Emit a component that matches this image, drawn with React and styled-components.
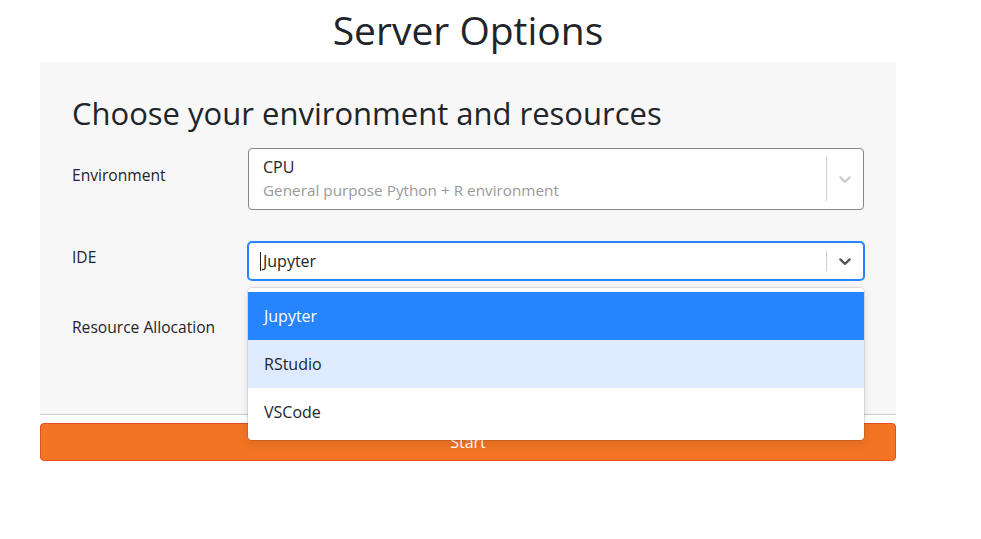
import React from 'react'
import styled, { createGlobalStyle } from 'styled-components'

const GlobalStyle = createGlobalStyle`
  body {
    margin: 0;
    background: #fff;
    font-family: 'Open Sans', 'Noto Sans', sans-serif;
    color: #212529;
  }
`

const ideOptions = [
  { label: 'Jupyter', state: 'selected' },
  { label: 'RStudio', state: 'focused' },
  { label: 'VSCode', state: 'idle' }
]

const Chevron = ({ color }) => (
  <svg width='20' height='20' viewBox='0 0 20 20' fill={color}>
    <path d='M4.516 7.548c0.436-0.446 1.043-0.481 1.576 0l3.908 3.747 3.908-3.747c0.533-0.481 1.141-0.446 1.574 0 0.436 0.445 0.408 1.197 0 1.615-0.406 0.418-4.695 4.502-4.695 4.502-0.217 0.223-0.502 0.335-0.787 0.335s-0.57-0.112-0.789-0.335c0 0-4.287-4.084-4.695-4.502s-0.436-1.17 0-1.615z' />
  </svg>
)

const App = () => (
  <Page>
    <GlobalStyle />
    <Title>Server Options</Title>
    <Panel>
      <Heading>Choose your environment and resources</Heading>

      <FormRow>
        <Label>Environment</Label>
        <Control $height={62} $border='#888'>
          <ValueBox>
            <Value>CPU</Value>
            <Hint>General purpose Python + R environment</Hint>
          </ValueBox>
          <Separator />
          <Indicator><Chevron color='#ccc' /></Indicator>
        </Control>
      </FormRow>

      <FormRow>
        <Label>IDE</Label>
        <Field>
          <Control $height={38} $focused>
            <ValueBox>
              <Value><Caret />Jupyter</Value>
            </ValueBox>
            <Separator />
            <Indicator><Chevron color='#555' /></Indicator>
          </Control>
          <Menu>
            {ideOptions.map((option) => (
              <MenuOption key={option.label} $state={option.state}>
                {option.label}
              </MenuOption>
            ))}
          </Menu>
        </Field>
      </FormRow>

      <FormRow>
        <Label>Resource Allocation</Label>
        <Control $height={38} $border='#ccc'>
          <ValueBox />
          <Separator />
          <Indicator><Chevron color='#ccc' /></Indicator>
        </Control>
      </FormRow>
    </Panel>
    <StartButton>Start</StartButton>
  </Page>
)

export default App

const Page = styled.div`
  width: 856px;
  margin: 0 0 0 40px;
  display: flex;
  flex-direction: column;
`

const Title = styled.h1`
  margin: 6px 0 8px;
  text-align: center;
  font-size: 39px;
  font-weight: 400;
  line-height: 48px;
  color: #212529;
`

const Panel = styled.div`
  background: #f7f7f7;
  border-bottom: 1px solid #ccc;
  padding: 32px 32px 32px;
  display: flex;
  flex-direction: column;
`

const Heading = styled.h2`
  margin: 0 0 16px;
  font-size: 31px;
  font-weight: 400;
  line-height: 38px;
  color: #212529;
`

const FormRow = styled.div`
  display: grid;
  grid-template-columns: 176px 1fr;
  align-items: center;
  margin-bottom: 32px;
`

const Label = styled.div`
  font-size: 15.6px;
  line-height: 24px;
  margin-top: -8px;
  color: #212529;
`

const Field = styled.div`
  position: relative;
`

const Control = styled.div`
  box-sizing: border-box;
  height: ${(p) => p.$height}px;
  display: flex;
  align-items: stretch;
  background: #fff;
  border: 1px solid ${(p) => (p.$focused ? '#2684ff' : p.$border)};
  box-shadow: ${(p) => (p.$focused ? '0 0 0 1px #2684ff' : 'none')};
  border-radius: 4px;
`

const ValueBox = styled.div`
  flex: 1;
  display: flex;
  flex-direction: column;
  justify-content: center;
  padding: 0 14px;
`

const Value = styled.div`
  font-size: 16px;
  line-height: 22px;
  color: #212529;
  display: flex;
  align-items: center;
`

const Caret = styled.span`
  width: 1px;
  height: 19px;
  background: #222;
  margin: 0 2px 0 -3px;
`

const Hint = styled.div`
  font-size: 15.3px;
  line-height: 24px;
  color: #999;
`

const Separator = styled.span`
  width: 1px;
  background: #ccc;
  margin: 8px 0;
`

const Indicator = styled.div`
  display: flex;
  align-items: center;
  padding: 0 8px;
`

const Menu = styled.div`
  position: absolute;
  top: 46px;
  left: 0;
  right: 0;
  z-index: 2;
  background: #fff;
  border-radius: 4px;
  padding: 4px 0;
  box-shadow: 0 0 0 1px rgba(0, 0, 0, 0.1), 0 4px 11px rgba(0, 0, 0, 0.1);
`

const optionBg = { selected: '#2684ff', focused: '#deebff', idle: 'transparent' }

const MenuOption = styled.div`
  height: 48px;
  display: flex;
  align-items: center;
  padding: 0 16px;
  font-size: 16px;
  background: ${(p) => optionBg[p.$state]};
  color: ${(p) => (p.$state === 'selected' ? '#fff' : '#212529')};
`

const StartButton = styled.button`
  margin-top: 8px;
  height: 38px;
  background: #f37524;
  border: 1px solid #e34f21;
  border-radius: 4px;
  color: #fff;
  font-family: inherit;
  font-size: 16px;
`
